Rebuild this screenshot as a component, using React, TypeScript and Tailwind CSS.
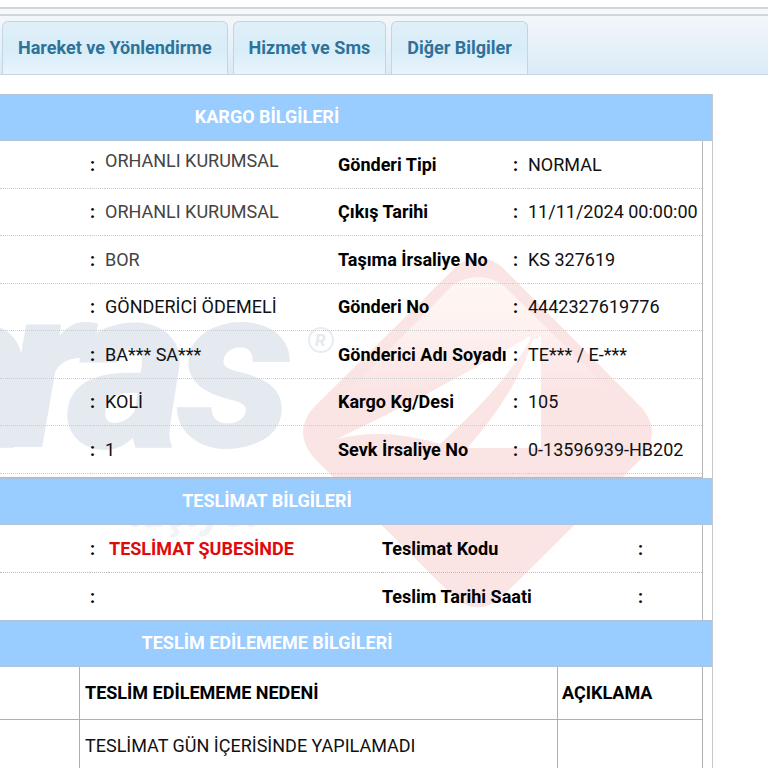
import React from "react";

const TABS = ["Hareket ve Yönlendirme", "Hizmet ve Sms", "Diğer Bilgiler"];

type CargoRow = { value: string; muted?: boolean; raised?: boolean; label: string; detail: string };

const CARGO: CargoRow[] = [
  { value: "ORHANLI KURUMSAL", muted: true, raised: true, label: "Gönderi Tipi", detail: "NORMAL" },
  { value: "ORHANLI KURUMSAL", muted: true, label: "Çıkış Tarihi", detail: "11/11/2024 00:00:00" },
  { value: "BOR", muted: true, label: "Taşıma İrsaliye No", detail: "KS 327619" },
  { value: "GÖNDERİCİ ÖDEMELİ", label: "Gönderi No", detail: "4442327619776" },
  { value: "BA*** SA***", label: "Gönderici Adı Soyadı", detail: "TE*** / E-***" },
  { value: "KOLİ", label: "Kargo Kg/Desi", detail: "105" },
  { value: "1", label: "Sevk İrsaliye No", detail: "0-13596939-HB202" },
];

function Title({ children }: { children: React.ReactNode }) {
  return (
    <h2 className="relative h-[47px] border-y-2 border-[#b0c4de] bg-[#99ccff] pr-[178px] text-center text-lg leading-[41px] font-bold text-white">
      {children}
    </h2>
  );
}

function Watermark() {
  return (
    <svg className="pointer-events-none absolute top-0 left-0" width="712" height="674" viewBox="0 94 712 674" aria-hidden="true">
      <defs>
        <linearGradient id="glow" x1="0" y1="270" x2="0" y2="392" gradientUnits="userSpaceOnUse">
          <stop offset="0" stopColor="#fff8f5" />
          <stop offset="0.5" stopColor="#fdf1ef" />
          <stop offset="1" stopColor="#fbe4e4" />
        </linearGradient>
      </defs>
      <g fill="#e5e9f0" fontFamily="Roboto" fontStyle="italic" fontWeight="900" fontSize="232">
        <text x="-90" y="447">a</text>
        <text x="6" y="447">r</text>
        <text x="68" y="447">a</text>
        <text x="178" y="447">s</text>
      </g>
      <text x="264" y="527" textAnchor="end" fill="#f1f3f7" fontFamily="Roboto" fontSize="46" fontStyle="italic" fontWeight="700">taşıyor</text>
      <circle cx="321" cy="340" r="12" fill="none" stroke="#e9ecf2" strokeWidth="2" />
      <text x="315" y="346" fill="#e5e9f0" fontFamily="Roboto" fontSize="17" fontStyle="italic" fontWeight="700">R</text>
      <path d="M456 267Q478 248 502 267L641 407Q663 432 641 459L502 597Q478 618 454 597L315 459Q291 432 315 406Z" fill="#fbe4e4" />
      <path d="M453 285Q478 269 503 285L612 392H348Z" fill="url(#glow)" />
      <path d="M530 336Q440 390 337 439Q385 427 440 444Q505 385 530 340Z" fill="#fff" />
      <path d="M533 340L541 336V448H467Q515 395 533 340Z" fill="#fff" />
    </svg>
  );
}

export default function App() {
  return (
    <main className="h-screen overflow-hidden bg-white pt-[7px] font-[Roboto,sans-serif] text-lg text-black">
      <div className="h-[9px] border-y-2 border-[#d2d5d9] bg-[#f7f8f9]" />
      <nav className="flex h-[59px] items-end gap-[5px] border-b border-[#c5d5e4] bg-linear-to-b from-[#f3f7fa] to-[#dbebf7] pl-[2px]">
        {TABS.map((tab) => (
          <a
            key={tab}
            href="#"
            className="h-[53px] rounded-t-md border border-b-0 border-[#c2d5e3] bg-linear-to-b from-[#e0eff8] from-0% via-[#d8edf8] via-55% to-[#e9f4fd] px-[15px] leading-[52px] font-bold whitespace-nowrap text-[#2f7299]"
          >
            {tab}
          </a>
        ))}
      </nav>

      <section className="relative mt-[19px] mr-[55px] border-r border-[#c5c9d0]">
        <Watermark />
        <Title>KARGO BİLGİLERİ</Title>
        <div className="relative mr-[9px] border-r border-b border-[#b8b8b8] pb-[3px]">
          <table className="w-full table-fixed border-separate border-spacing-0">
            <colgroup>
              <col className="w-[90px]" />
              <col className="w-[15px]" />
              <col />
              <col className="w-[175px]" />
              <col className="w-[15px]" />
              <col className="w-[174px]" />
            </colgroup>
            <tbody>
              {CARGO.map((row) => (
                <tr key={row.label} className="h-[48px] whitespace-nowrap even:h-[47px] [&>td]:border-b [&>td]:border-dotted [&>td]:border-[#ccc] [&>th]:border-b [&>th]:border-dotted [&>th]:border-[#ccc]">
                  <td />
                  <td className="font-bold">:</td>
                  <td className={row.muted ? "text-[#444]" : "text-[#111]"}>
                    <span className={row.raised ? "block pb-2" : "block"}>{row.value}</span>
                  </td>
                  <th scope="row" className="text-left font-bold">{row.label}</th>
                  <td className="font-bold">:</td>
                  <td className="text-[#111]">{row.detail}</td>
                </tr>
              ))}
            </tbody>
          </table>
        </div>

        <Title>TESLİMAT BİLGİLERİ</Title>
        <div className="relative mr-[9px] border-r border-[#b8b8b8]">
          <table className="w-full table-fixed border-separate border-spacing-0">
            <colgroup>
              <col className="w-[90px]" />
              <col className="w-[19px]" />
              <col />
              <col className="w-[256px]" />
              <col className="w-[64px]" />
            </colgroup>
            <tbody>
              <tr className="h-[48px] [&>td]:border-b [&>td]:border-dotted [&>td]:border-[#bbb] [&>th]:border-b [&>th]:border-dotted [&>th]:border-[#bbb]">
                <td />
                <td className="font-bold">:</td>
                <td className="font-bold text-[#e00a0a]">TESLİMAT ŞUBESİNDE</td>
                <th scope="row" className="text-left font-bold">Teslimat Kodu</th>
                <td className="font-bold">:</td>
              </tr>
              <tr className="h-[47px]">
                <td />
                <td className="font-bold">:</td>
                <td />
                <th scope="row" className="text-left font-bold">Teslim Tarihi Saati</th>
                <td className="font-bold">:</td>
              </tr>
            </tbody>
          </table>
        </div>

        <Title>TESLİM EDİLEMEME BİLGİLERİ</Title>
        <div className="relative mr-[9px] border-r border-[#b0b0b0]">
          <table className="w-full table-fixed border-separate border-spacing-0">
            <colgroup>
              <col className="w-[80px]" />
              <col />
              <col className="w-[144px]" />
            </colgroup>
            <thead>
              <tr className="h-[53px] text-left [&>*]:border-b [&>*]:border-[#b0b0b0]">
                <td className="border-r" />
                <th scope="col" className="border-r pl-[5px] font-bold">TESLİM EDİLEMEME NEDENİ</th>
                <th scope="col" className="pl-1 font-bold">AÇIKLAMA</th>
              </tr>
            </thead>
            <tbody>
              <tr className="h-[52px] [&>*]:border-[#b0b0b0]">
                <td className="border-r" />
                <td className="border-r pl-[5px] text-[#111]">TESLİMAT GÜN İÇERİSİNDE YAPILAMADI</td>
                <td />
              </tr>
            </tbody>
          </table>
        </div>
      </section>
    </main>
  );
}
